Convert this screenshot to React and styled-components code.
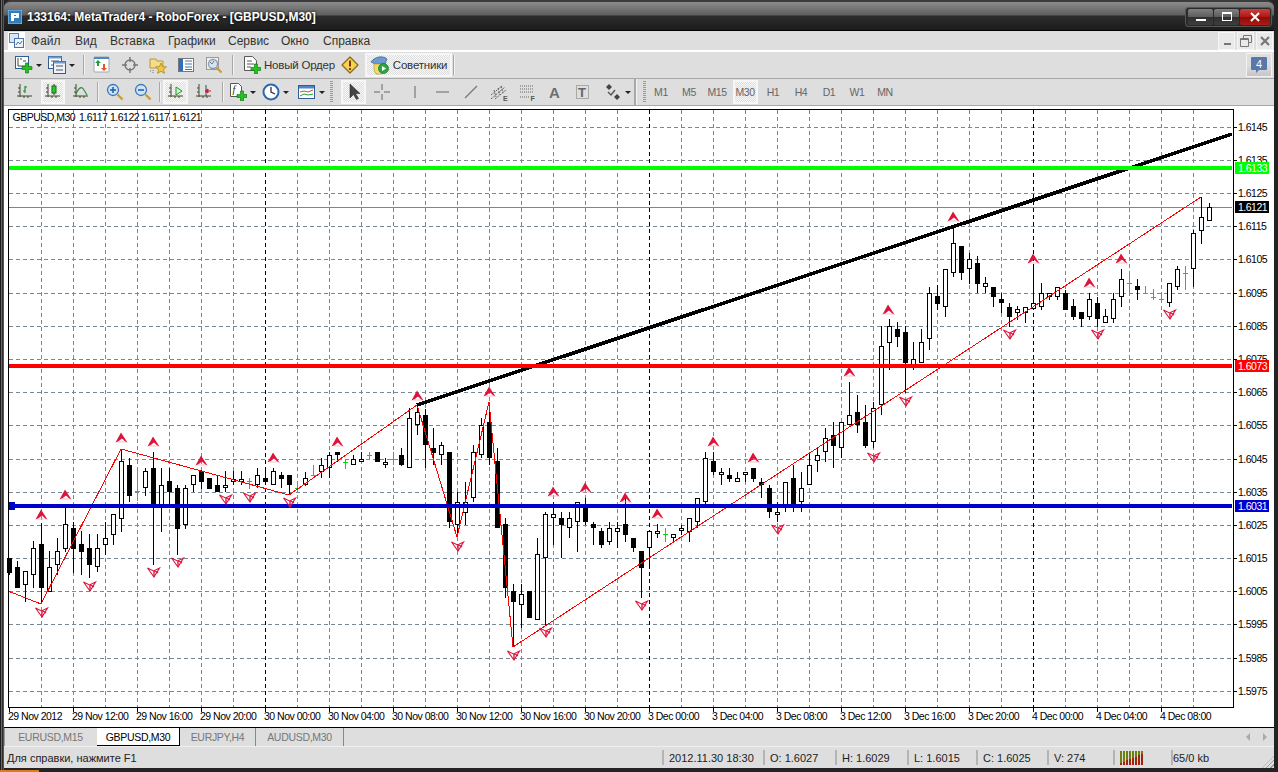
import React from "react";
import styled, { createGlobalStyle } from "styled-components";

const GlobalStyle = createGlobalStyle`
  html, body { margin: 0; padding: 0; background: #222; overflow: hidden; }
  body { font-family: "Liberation Sans", Arial, sans-serif; }
`;

// ---- chart data, read off in 3x crops: [high, bodyTop, bodyBottom, low, kind]
const seg = (x, y0, rows) =>
  rows.map((r, i) => ({
    x: x + i * 8,
    hi: Math.round(y0 + r[0] / 3),
    top: Math.round(y0 + r[1] / 3),
    bot: Math.round(y0 + r[2] / 3),
    lo: Math.round(y0 + r[3] / 3),
    kind: r[4],
  }));

const candles = [
  ...seg(9, 420, [
    [415, 415, 458, 465, "b"], [423, 441, 503, 503, "b"], [454, 454, 494, 545, "w"], [363, 385, 464, 503, "w"],
    [310, 372, 503, 552, "b"], [393, 441, 515, 515, "w"], [354, 393, 434, 466, "w"], [262, 313, 386, 396, "w"],
    [305, 324, 386, 460, "b"], [333, 372, 395, 465, "b"], [343, 384, 434, 473, "b"], [343, 385, 442, 455, "w"],
    [305, 355, 374, 405, "w"], [283, 283, 344, 375, "w"], [87, 124, 296, 336, "w"], [115, 135, 227, 245, "b"],
    [145, 214, 214, 242, "g"], [143, 153, 205, 228, "w"], [97, 144, 252, 435, "b"], [144, 196, 265, 336, "w"],
    [144, 183, 215, 258, "b"], [195, 204, 326, 405, "b"], [195, 205, 314, 327, "w"], [166, 166, 196, 216, "w"],
    [150, 153, 185, 208, "b"], [175, 175, 206, 206, "b"], [165, 196, 215, 216, "b"], [153, 196, 205, 216, "w"],
    [153, 176, 185, 196, "w"], [153, 176, 185, 196, "w"], [175, 184, 184, 207, "g"], [143, 166, 196, 205, "w"],
    [145, 175, 186, 190, "b"], [145, 154, 196, 196, "w"], [155, 166, 176, 205, "b"], [166, 166, 196, 225, "b"],
    [196, 204, 204, 215, "g"], [155, 175, 196, 198, "w"], [136, 166, 166, 166, "g"],
  ]),
  ...seg(321, 380, [
    [235, 255, 275, 295, "w"], [215, 226, 265, 295, "w"], [216, 216, 226, 245, "b"], [236, 245, 245, 266, "g"],
    [226, 236, 256, 256, "w"], [216, 236, 245, 245, "w"], [216, 226, 226, 236, "g"], [216, 216, 245, 245, "b"],
    [235, 245, 256, 265, "w"], [215, 236, 236, 255, "g"], [205, 226, 256, 258, "b"], [85, 115, 265, 265, "w"],
    [77, 97, 136, 166, "w"], [87, 105, 196, 265, "b"], [145, 205, 218, 255, "b"], [186, 196, 226, 256, "w"],
    [216, 216, 425, 445, "b"], [335, 365, 434, 465, "w"], [305, 365, 400, 435, "w"], [195, 217, 355, 365, "w"],
    [115, 136, 226, 235, "w"], [85, 125, 235, 255, "b"], [205, 244, 445, 445, "b"], [415, 433, 623, 653, "b"],
    [613, 633, 665, 800, "b"], [613, 643, 674, 743, "w"], [633, 633, 713, 713, "b"], [473, 523, 721, 721, "w"],
    [395, 403, 535, 735, "w"], [365, 403, 415, 495, "w"], [395, 415, 434, 535, "b"], [395, 415, 445, 475, "w"],
    [365, 365, 425, 515, "w"], [355, 385, 425, 435, "b"], [425, 433, 445, 495, "b"], [445, 453, 495, 505, "b"],
    [425, 445, 485, 495, "w"], [425, 445, 455, 505, "w"], [355, 433, 465, 485, "b"], [475, 475, 505, 515, "b"],
  ]),
  ...seg(641, 360, [
    [573, 573, 623, 714, "b"], [514, 514, 565, 625, "w"], [492, 514, 523, 535, "w"], [505, 523, 523, 545, "g"],
    [523, 523, 535, 545, "w"], [495, 505, 514, 525, "w"], [475, 475, 515, 545, "w"], [415, 415, 485, 505, "w"],
    [277, 295, 425, 445, "w"], [275, 304, 335, 345, "b"], [325, 335, 346, 375, "w"], [325, 345, 356, 365, "b"],
    [335, 355, 365, 365, "w"], [335, 335, 346, 365, "w"], [325, 325, 356, 365, "b"], [355, 365, 375, 415, "b"],
    [375, 385, 455, 475, "b"], [425, 455, 464, 485, "w"], [365, 365, 445, 455, "w"], [315, 355, 435, 455, "b"],
    [335, 385, 425, 455, "w"], [275, 315, 376, 376, "w"], [265, 286, 304, 335, "w"], [205, 235, 277, 305, "w"],
    [187, 225, 257, 325, "b"], [187, 187, 265, 295, "w"], [65, 166, 196, 196, "w"], [105, 156, 196, 220, "b"],
    [135, 186, 257, 265, "b"], [125, 145, 247, 265, "w"],
  ]),
  ...seg(881, 290, [
    [108, 168, 345, 375, "w"], [88, 108, 158, 240, "w"], [96, 117, 140, 170, "b"], [108, 126, 218, 310, "b"],
    [156, 208, 228, 240, "w"], [117, 156, 218, 218, "w"], [-10, 10, 148, 180, "w"], [-15, 18, 42, 60, "b"],
  ]),
  ...seg(945, 180, [
    [268, 268, 380, 410, "w"], [140, 190, 280, 290, "w"], [198, 198, 280, 300, "b"], [220, 238, 268, 312, "w"],
    [228, 250, 312, 340, "b"], [290, 310, 320, 340, "w"], [320, 320, 350, 380, "b"], [340, 358, 370, 400, "b"],
    [370, 380, 410, 440, "b"], [378, 388, 398, 420, "w"], [380, 380, 400, 428, "w"], [252, 370, 388, 390, "w"],
    [310, 340, 380, 390, "w"], [340, 340, 350, 360, "w"], [320, 320, 350, 360, "w"], [330, 340, 390, 390, "b"],
    [358, 378, 410, 420, "b"], [397, 397, 418, 440, "b"], [340, 358, 410, 420, "w"], [350, 370, 418, 440, "b"],
    [388, 408, 428, 428, "w"], [340, 358, 418, 428, "w"], [268, 298, 350, 380, "w"], [278, 310, 310, 340, "g"],
    [298, 318, 330, 360, "b"], [318, 340, 340, 340, "g"], [328, 350, 350, 360, "g"], [340, 358, 358, 370, "g"],
    [310, 310, 370, 380, "w"], [258, 268, 320, 330, "w"], [258, 280, 280, 330, "g"], [150, 160, 268, 320, "w"],
    [52, 110, 152, 192, "w"], [70, 82, 122, 122, "w"],
  ]),
];

const fractalsUp = [
  [41, 515], [65, 495], [121, 438], [153, 442], [201, 461], [273, 458], [337, 442], [417, 396], [489, 392],
  [553, 492], [585, 488], [625, 498], [657, 514], [713, 442], [753, 458], [849, 372], [888, 310], [953, 217],
  [1033, 259], [1089, 283], [1121, 259],
];
const fractalsDown = [
  [41, 612], [89, 586], [153, 572], [177, 562], [225, 499], [249, 497], [289, 502], [457, 546], [513, 655],
  [545, 632], [641, 605], [777, 529], [873, 457], [905, 401], [1009, 334], [1097, 334], [1169, 314],
];
const zigzag = "8,591 41,604 121,449 289,495 417,405 457,537 489,402 513,647 1201,197";

const vGrid = Array.from({ length: 37 }, (_, i) => 41 + i * 32);
const hGrid = Array.from({ length: 18 }, (_, i) => Math.round(126.7 + i * 33.18));
const timeLabels = [
  "29 Nov 2012", "29 Nov 12:00", "29 Nov 16:00", "29 Nov 20:00", "30 Nov 00:00", "30 Nov 04:00", "30 Nov 08:00",
  "30 Nov 12:00", "30 Nov 16:00", "30 Nov 20:00", "3 Dec 00:00", "3 Dec 04:00", "3 Dec 08:00", "3 Dec 12:00",
  "3 Dec 16:00", "3 Dec 20:00", "4 Dec 00:00", "4 Dec 04:00", "4 Dec 08:00",
];
const priceTags = [
  { y: 168, label: "1.6133", bg: "#00ff00" },
  { y: 207, label: "1.6121", bg: "#000" },
  { y: 366, label: "1.6073", bg: "#ff0000" },
  { y: 506, label: "1.6031", bg: "#0000cd" },
];

const GRID = "#778899";

function Candle({ c }) {
  if (c.kind === "g") {
    return (
      <g fill="#00e000">
        <rect x={c.x} y={c.hi} width="1" height={c.lo - c.hi} />
        <rect x={c.x - 2} y={c.top} width="5" height="1" />
      </g>
    );
  }
  return (
    <g>
      <rect x={c.x} y={c.hi} width="1" height={c.lo - c.hi} fill="#000" />
      {c.kind === "b" ? (
        <rect x={c.x - 2} y={c.top} width="5" height={c.bot - c.top} fill="#000" />
      ) : (
        <rect x={c.x - 1.5} y={c.top + 0.5} width="4" height={c.bot - c.top - 1} fill="#fff" stroke="#000" />
      )}
    </g>
  );
}

function Fractal({ x, y, up }) {
  return up ? (
    <g transform={`translate(${x + 0.5} ${y})`}>
      <path d="M-.5-5.5 6 4.5 3 3.2.5.5-3 3.2-6 4.5Z" fill="#dc143c" />
      <path d="M-4 4H5" stroke="#f2a6b8" strokeWidth=".7" />
      <path d="M1.5 1.5 3 3.5" stroke="#fff" strokeWidth=".7" />
    </g>
  ) : (
    <g transform={`translate(${x + 0.5} ${y})`} fill="none" stroke="#dc143c">
      <path d="M-6-4 0-1 6-4 .5 5Z" strokeWidth="1.1" />
      <path d="M.5-1V5M1.5-1 4.5 1" strokeWidth="1.4" />
    </g>
  );
}

function PriceChart() {
  return (
    <ChartSvg viewBox="4 106 1270 621" width="1270" height="621">
      <rect x="4" y="106" width="1270" height="621" fill="#fff" />
      <g shapeRendering="crispEdges">
        {hGrid.map((y) => (
          <line key={y} x1="9" x2="1232" y1={y + 0.5} y2={y + 0.5} stroke={GRID} strokeDasharray="4 3" />
        ))}
        {vGrid.map((x) => (
          <line
            key={x}
            x1={x + 0.5}
            x2={x + 0.5}
            y1="110"
            y2="707"
            stroke={(x - 265) % 384 === 0 ? "#000" : GRID}
            strokeDasharray="4 3"
          />
        ))}
        <rect x="9" y="207" width="1223" height="1" fill={GRID} />
        {candles.map((c) => (
          <Candle key={c.x} c={c} />
        ))}
        <polyline points={zigzag} fill="none" stroke="#ff0000" />
        <line x1="417" y1="405" x2="1232" y2="134" stroke="#000" strokeWidth="3.6" />
        <rect x="9" y="166" width="1223" height="4" fill="#00ff00" />
        <rect x="9" y="364" width="1223" height="4" fill="#ff0000" />
        <rect x="9" y="504" width="1223" height="4" fill="#0000cd" />
        <rect x="9" y="502" width="6" height="8" fill="#0000cd" />
        <rect x="8" y="109" width="1225" height="598.5" fill="none" stroke="#000" />
        {hGrid.map((y) => (
          <rect key={y} x="1233" y={y} width="4" height="1" fill="#000" />
        ))}
        {timeLabels.map((_, i) => (
          <rect key={i} x={9 + i * 64} y="708" width="1" height="4" fill="#000" />
        ))}
      </g>
      {fractalsUp.map(([x, y]) => (
        <Fractal key={x} x={x} y={y} up />
      ))}
      {fractalsDown.map(([x, y]) => (
        <Fractal key={x} x={x} y={y} />
      ))}
      <AxisText x="12.5" y="121">GBPUSD,M30</AxisText>
      {["1.6117", "1.6122", "1.6117", "1.6121"].map((v, i) => (
        <AxisText key={i} x={79 + i * 31} y="121">
          {v}
        </AxisText>
      ))}
      {hGrid.map((y, i) => (
        <AxisText key={y} x="1238" y={y + 4}>
          {(1.6145 - i * 0.001).toFixed(4)}
        </AxisText>
      ))}
      {timeLabels.map((t, i) => (
        <AxisText key={t} x={8 + i * 64} y="720">
          {t}
        </AxisText>
      ))}
      {priceTags.map((t) => (
        <g key={t.label}>
          <rect x="1235" y={t.y - 6} width="34" height="12" fill={t.bg} shapeRendering="crispEdges" />
          <AxisText x="1238" y={t.y + 4} fill="#fff">
            {t.label}
          </AxisText>
        </g>
      ))}
    </ChartSvg>
  );
}

// ---- toolbar icons
const Svg = ({ w = 18, h = 18, children }) => (
  <svg width={w} height={h} viewBox={`0 0 ${w} ${h}`} style={{ display: "block" }}>
    {children}
  </svg>
);
const Plus = ({ x = 8, y = 8 }) => (
  <path
    transform={`translate(${x} ${y})`}
    d="M3.5 0h3v3.5H10v3H6.5V10h-3V6.5H0v-3h3.5z"
    fill="#22c322"
    stroke="#0b6b0b"
    strokeWidth=".6"
  />
);
const AxisMark = ({ color = "#3a4a2a" }) => (
  <path d="M4 1v13M1 13h15M2 5h2M2 9h2M8 13v2M12 13v2" fill="none" stroke={color} />
);

const IconNewChart = () => (
  <Svg>
    <rect x=".5" y=".5" width="13" height="12" fill="#fff" stroke="#2e5d9a" />
    <path d="M3 2v8h9M5 3h2M8 5h3" fill="none" stroke="#444" />
    <Plus x="7" y="7" />
  </Svg>
);
const IconProfiles = () => (
  <Svg>
    <rect x=".5" y=".5" width="13" height="12" fill="#fff" stroke="#2e5d9a" />
    <rect x=".5" y=".5" width="13" height="2" fill="#6f9bd1" />
    <path d="M3 5h8M3 9h8" stroke="#555" />
    <rect x="5.5" y="5.5" width="12" height="12" fill="#eaf2fb" stroke="#2e5d9a" />
    <rect x="5.5" y="5.5" width="12" height="2" fill="#6f9bd1" />
    <path d="M8 10h7M8 14h7" stroke="#555" />
  </Svg>
);
const IconMarket = () => (
  <Svg>
    <rect x="1" y="1" width="15" height="15" rx="1" fill="#fff" stroke="#9aa9b5" />
    <rect x="1" y="1" width="15" height="2" fill="#4f86c6" />
    <path d="M5 4l3 3H6v3H4V7H2z" fill="#1f9e3b" />
    <path d="M11 15l-3-3h2V8h2v4h2z" fill="#e2542a" />
  </Svg>
);
const IconNavigator = () => (
  <Svg>
    <circle cx="9" cy="9" r="5" fill="none" stroke="#777" strokeWidth="1.4" />
    <path d="M9 1v5M9 12v5M1 9h5M12 9h5" stroke="#777" strokeWidth="1.4" />
  </Svg>
);
const IconFavorites = () => (
  <Svg>
    <path d="M1 3h6l1 2h6v7H1z" fill="#f4dc8c" stroke="#b9963e" />
    <path d="M12 7l1.6 3.6 3.9.3-3 2.6 1 3.8-3.5-2-3.4 2 .9-3.8-3-2.6 3.9-.3z" fill="#f0c63b" stroke="#a37d1b" strokeWidth=".7" />
    <path d="M4 14v3M1 15h1" stroke="#777" strokeDasharray="1 1" />
  </Svg>
);
const IconTerminal = () => (
  <Svg>
    <rect x="1.5" y="2.5" width="15" height="13" fill="#fff" stroke="#777" />
    <rect x="2" y="3" width="4" height="12" fill="#2f6fbe" />
    <path d="M8 5h7M8 8h7M8 11h7M8 13.5h7" stroke="#4a74a8" />
  </Svg>
);
const IconTester = () => (
  <Svg>
    <rect x="1.5" y="1.5" width="12" height="12" fill="#eee" stroke="#999" />
    <circle cx="8" cy="8" r="4.5" fill="#d5e4f3" stroke="#8a9bab" strokeWidth="1.3" />
    <path d="M5 6l2 2 2-3" fill="none" stroke="#777" />
    <path d="M11.5 11.5l5 5" stroke="#c79d3d" strokeWidth="2.2" />
  </Svg>
);
const IconOrder = () => (
  <Svg>
    <path d="M1.5.5h8l4 4v10h-12z" fill="#fff" stroke="#555" />
    <path d="M4 5h5M4 8h7M4 11h4" stroke="#555" />
    <Plus x="8" y="8" />
  </Svg>
);
const IconAlert = () => (
  <Svg>
    <path d="M9 1l8 8-8 8-8-8z" fill="#f6d255" stroke="#8a6a18" strokeWidth="1.2" strokeLinejoin="round" />
    <path d="M9 4.5v6M9 12v2" stroke="#7a3d10" strokeWidth="2" />
  </Svg>
);
const IconExperts = () => (
  <Svg w={20} h={20}>
    <path d="M1 7c3-5 12-7 16-3l-2 5H5z" fill="#6d9bd0" stroke="#35608f" strokeWidth=".7" />
    <path d="M4 9h11v4l-3 6H6l-2-4z" fill="#f0dc6c" stroke="#b49a33" strokeWidth=".7" />
    <circle cx="13.5" cy="13.5" r="5" fill="#28a843" stroke="#116b27" strokeWidth=".7" />
    <path d="M12 11l4 2.5-4 2.5z" fill="#fff" />
  </Svg>
);
const IconBars = () => (
  <Svg>
    <AxisMark />
    <path d="M9 3v7M7 8h2M9 4h2" fill="none" stroke="#1c8f2a" strokeWidth="1.2" />
  </Svg>
);
const IconCandles = () => (
  <Svg>
    <AxisMark />
    <path d="M10 1v11" stroke="#333" />
    <rect x="8" y="3" width="4" height="7" fill="#32c832" stroke="#126a12" />
  </Svg>
);
const IconLine = () => (
  <Svg>
    <AxisMark />
    <path d="M4 11c3-7 6-8 8-4l3 5" fill="none" stroke="#2c8a3a" strokeWidth="1.1" />
  </Svg>
);
const IconZoom = ({ minus }) => (
  <Svg>
    <circle cx="7" cy="7" r="5.5" fill="#cfe3f7" stroke="#3a78bd" strokeWidth="1.3" />
    <path d="M4 7h6" stroke="#2a62a8" strokeWidth="1.6" />
    {!minus && <path d="M7 4v6" stroke="#2a62a8" strokeWidth="1.6" />}
    <path d="M11.5 11.5l5 5" stroke="#c79d3d" strokeWidth="2.4" />
  </Svg>
);
const IconAutoScroll = () => (
  <Svg>
    <AxisMark />
    <path d="M9 4l6 4-6 4z" fill="#d8f5d0" stroke="#1c9a2b" />
  </Svg>
);
const IconShift = () => (
  <Svg>
    <AxisMark />
    <path d="M11 2v11" stroke="#2c4a7a" />
    <path d="M16 8h-3M13 6l-3 2 3 2z" fill="#d21f1f" stroke="#d21f1f" />
  </Svg>
);
const IconIndicators = () => (
  <Svg>
    <path d="M1.5.5h8l3 3v10h-11z" fill="#fff" stroke="#555" />
    <text x="3.5" y="10" fontSize="10" fontFamily="Liberation Serif, serif" fontStyle="italic" fill="#222">f</text>
    <Plus x="8" y="8" />
  </Svg>
);
const IconClock = () => (
  <Svg>
    <circle cx="9" cy="9" r="7.5" fill="#fff" stroke="#2c68ad" strokeWidth="2" />
    <path d="M9 4v5l4 2" fill="none" stroke="#2f2f4a" strokeWidth="1.3" />
  </Svg>
);
const IconTemplate = () => (
  <Svg>
    <rect x=".5" y="2.5" width="16" height="13" fill="#fff" stroke="#2e5d9a" />
    <rect x="1" y="3" width="15" height="2.5" fill="#4f86c6" />
    <path d="M2 9l4-1 4 1 5-2" fill="none" stroke="#d24a2a" />
    <path d="M2 13l4-2 4 1 5-1" fill="none" stroke="#2c9a3a" />
  </Svg>
);
const IconCursor = () => (
  <Svg>
    <path d="M5 1v14l3.5-3.5 3 5 2-1-3-5H15z" fill="#444" stroke="#222" strokeWidth=".5" />
  </Svg>
);
const IconCross = () => (
  <Svg>
    <path d="M9 1v6M9 11v6M1 9h6M11 9h6" stroke="#666" />
  </Svg>
);
const IconVLine = () => (
  <Svg>
    <path d="M9 3v12" stroke="#666" />
  </Svg>
);
const IconHLine = () => (
  <Svg>
    <path d="M2 9h13" stroke="#666" />
  </Svg>
);
const IconTrend = () => (
  <Svg>
    <path d="M3 15L15 3" stroke="#777" strokeWidth="1.2" />
  </Svg>
);
const IconFibChannel = () => (
  <Svg>
    <path d="M1 12L12 3M1 16L15 4M5 16L16 7M4 7l2 7M8 5l2 7M11 3l2 7" fill="none" stroke="#666" strokeDasharray="2 1" />
    <text x="13" y="18" fontSize="7" fontWeight="bold" fill="#555">E</text>
  </Svg>
);
const IconFibLevels = () => (
  <Svg>
    <path d="M2 3h13M2 6h13M2 9h13M2 14h10" stroke="#666" strokeDasharray="1 1" />
    <text x="12.5" y="18" fontSize="7" fontWeight="bold" fill="#555">F</text>
  </Svg>
);
const IconTextA = () => (
  <Svg>
    <text x="3" y="15" fontSize="15" fontWeight="bold" fill="#6e6e6e">A</text>
  </Svg>
);
const IconTextT = () => (
  <Svg>
    <rect x="2.5" y="2.5" width="12" height="13" fill="none" stroke="#777" strokeDasharray="1 1" />
    <text x="4" y="14" fontSize="13" fontWeight="bold" fill="#666">T</text>
  </Svg>
);
const IconArrows = () => (
  <Svg>
    <path d="M5 1l3 3-3 3-3-3z" fill="#444" />
    <path d="M13 11l3 3-3 3-3-3z" fill="#444" />
    <path d="M4 9l3 3 4-5" fill="none" stroke="#555" strokeWidth="1.4" />
  </Svg>
);
const IconAppDoc = () => (
  <svg width="17" height="18" viewBox="0 0 17 18" style={{ display: "block" }}>
    <rect x="0" y="0" width="17" height="18" fill="#fff" />
    <rect x="1.5" y="1.5" width="9" height="9" fill="#dbe6f4" stroke="#5b82b5" />
    <rect x="6.5" y="6.5" width="9" height="9" fill="#eef3fa" stroke="#4a72a8" />
    <path d="M8 13l2-3 2 2 2-3" fill="none" stroke="#4a72a8" />
  </svg>
);
const IconLogo = () => (
  <svg width="14" height="14" viewBox="0 0 14 14" style={{ display: "block" }}>
    <rect width="14" height="14" fill="#2f7fbe" stroke="#9cc8e8" />
    <path d="M3 3h8v5H6v3H3zM6 5v1h2V5z" fill="#fff" fillRule="evenodd" />
  </svg>
);
const IconBell = () => (
  <svg width="18" height="18" viewBox="0 0 18 18" style={{ display: "block" }}>
    <path d="M2 1h14a1 1 0 0 1 1 1v11a1 1 0 0 1-1 1H9l-3 3v-3H2a1 1 0 0 1-1-1V2a1 1 0 0 1 1-1z" fill="#5878ac" />
    <text x="9" y="11.5" textAnchor="middle" fontSize="11" fontFamily="Liberation Sans, sans-serif" fill="#fff">4</text>
  </svg>
);
const IconSignal = () => (
  <svg width="24" height="14" viewBox="0 0 24 14" style={{ display: "block" }} shapeRendering="crispEdges">
    {Array.from({ length: 8 }, (_, i) => {
      const split = 12 - i * 1.3;
      return (
        <g key={i}>
          <rect x={i * 3} y="0" width="2" height={split} fill="#6d7f10" />
          <rect x={i * 3} y={split} width="2" height={14 - split} fill="#a5200f" />
        </g>
      );
    })}
  </svg>
);

// ---- page parts
const Desktop = styled.div`
  position: relative;
  width: 1278px;
  height: 772px;
  box-sizing: border-box;
  padding: 0 4px 4px;
  display: flex;
  flex-direction: column;
  overflow: hidden;
  background:
    linear-gradient(90deg, #1b1b1b 0 1px, #6a6a6a 1px 2px, #2c2c2c 2px 3px, #555 3px 4px, transparent 4px) left / 4px 100% no-repeat,
    #232323;
  &::after {
    content: "";
    position: absolute;
    left: 0;
    bottom: 0;
    width: 39px;
    height: 2px;
    background: #e07a1f;
  }
`;

const TitleBar = styled.div`
  height: 31px;
  flex: none;
  display: flex;
  align-items: center;
  box-sizing: border-box;
  padding: 2px 3px 0 4px;
  border-radius: 7px 7px 0 0;
  border-top: 2px solid #3c3c3c;
  border-bottom: 1px solid #000;
  background: linear-gradient(
    180deg,
    #8b8b8b 0,
    #5e5e5e 13px,
    #2c2c2c 14px,
    #1c1c1c 100%
  );
`;

const TitleText = styled.div`
  margin-left: 5px;
  font-size: 12px;
  font-weight: bold;
  color: #fff;
  white-space: nowrap;
  text-shadow: 0 0 3px #000;
`;

const WindowControls = styled.div`
  margin-left: auto;
  display: flex;
  height: 16px;
  padding: 1px;
  background: #2a2a2a;
  border-radius: 3px;
  box-shadow: 0 0 0 1px #555;
`;

const WindowButton = styled.div`
  width: ${(p) => p.$w}px;
  display: flex;
  align-items: center;
  justify-content: center;
  border-radius: 2px;
  margin-left: 1px;
  background: ${(p) =>
    p.$danger
      ? "linear-gradient(180deg, #c9423f 0, #b01612 50%, #8a0c08 51%, #b01a14 100%)"
      : "linear-gradient(180deg, #808080 0, #5c5c5c 50%, #2f2f2f 51%, #3e3e3e 100%)"};
`;

const MenuBar = styled.div`
  height: 20px;
  flex: none;
  display: flex;
  align-items: center;
  box-sizing: border-box;
  padding-left: 4px;
  background: #dedede;
  border-bottom: 1px solid #fff;
`;

const MenuItem = styled.span`
  width: ${(p) => p.$w}px;
  font-size: 12px;
  color: #333;
`;

const MdiButtons = styled.div`
  margin-left: auto;
  display: flex;
  gap: 2px;
  padding-right: 1px;
  height: 18px;
`;

const MdiButton = styled.div`
  width: 17px;
  box-sizing: border-box;
  display: flex;
  align-items: center;
  justify-content: center;
  background: #e9e9e9;
  border: 1px solid #f6f6f6;
`;

const Toolbar = styled.div`
  height: ${(p) => p.$h}px;
  flex: none;
  display: flex;
  align-items: center;
  box-sizing: border-box;
  background: #dedede;
  border-top: ${(p) => (p.$top ? "1px solid #fff" : "0")};
  border-bottom: 1px solid #a8a8a8;
  padding-left: ${(p) => p.$pad}px;
`;

const ToolButton = styled.div`
  width: ${(p) => p.$w || 28}px;
  height: 24px;
  margin: 0 ${(p) => p.$gap || 0}px;
  flex: none;
  box-sizing: border-box;
  display: flex;
  align-items: center;
  justify-content: ${(p) => (p.$pl !== undefined ? "flex-start" : "center")};
  padding-left: ${(p) => p.$pl || 0}px;
  gap: 3px;
  font-size: 11.5px;
  letter-spacing: -0.2px;
  color: #333;
  white-space: nowrap;
  ${(p) =>
    p.$pressed &&
    `
    border: 2px solid #f6f6f6;
    background: repeating-conic-gradient(#f8f8f8 0 25%, #dedede 0 50%) 0 0 / 2px 2px;
  `}
`;

const Caret = styled.span`
  width: 0;
  height: 0;
  border-left: 3px solid transparent;
  border-right: 3px solid transparent;
  border-top: 3px solid #222;
`;

const Separator = styled.div`
  width: 1px;
  height: 20px;
  flex: none;
  margin: 0 ${(p) => p.$gap || 0}px;
  background: #a8a8a8;
  border-right: 1px solid #f2f2f2;
`;

const Spacer = styled.div`
  width: ${(p) => p.$w}px;
  flex: none;
`;

const Grip = styled.div`
  width: 3px;
  height: 22px;
  flex: none;
  margin: ${(p) => p.$m};
  background: repeating-linear-gradient(180deg, #999 0 1px, #dedede 1px 2px);
`;

const Notifier = styled.div`
  margin-left: auto;
  margin-right: 2px;
  width: 26px;
  height: 24px;
  box-sizing: border-box;
  display: flex;
  align-items: center;
  justify-content: center;
  border: 1px solid #f2f2f2;
  background: linear-gradient(180deg, #dedede 0 50%, #c6c6c6 100%);
`;

const BarEnd = styled.div`
  width: 3px;
  height: 100%;
  flex: none;
  margin: 0 3px;
  border-left: 2px solid #a8a8a8;
  border-right: 1px solid #f2f2f2;
  box-sizing: border-box;
`;

const TimeframeText = styled.span`
  color: #666;
  font-size: 10.5px;
  letter-spacing: -0.4px;
`;

const ChartSvg = styled.svg`
  display: block;
  flex: none;
`;

const AxisText = styled.text`
  font-family: "Liberation Sans", Arial, sans-serif;
  font-size: 10.5px;
  letter-spacing: -0.5px;
  fill: ${(p) => p.fill || "#000"};
`;

const TabBar = styled.div`
  height: 20px;
  flex: none;
  display: flex;
  align-items: stretch;
  box-sizing: border-box;
  background: #dedede;
  border-top: 1px solid #000;
  border-bottom: 1px solid #efefef;
  font-size: 10.5px;
  letter-spacing: -0.3px;
`;

const Tab = styled.div`
  width: ${(p) => p.$w}px;
  flex: none;
  box-sizing: border-box;
  display: flex;
  align-items: center;
  justify-content: center;
  color: ${(p) => (p.$active ? "#000" : "#777")};
  background: ${(p) => (p.$active ? "#fff" : "transparent")};
  border-left: ${(p) => (p.$plain ? "1px solid #999" : "0")};
  border-right: 1px solid ${(p) => (p.$active ? "#000" : p.$plain ? "transparent" : "#888")};
  border-bottom: ${(p) => (p.$active ? "1px solid #000" : "0")};
`;

const TabArrows = styled.div`
  margin-left: auto;
  display: flex;
  align-items: center;
  gap: 13px;
  padding-right: 7px;
`;

const TabArrow = styled.span`
  width: 0;
  height: 0;
  border-top: 4px solid transparent;
  border-bottom: 4px solid transparent;
  ${(p) => (p.$left ? "border-right: 4px solid #aaa;" : "border-left: 4px solid #aaa;")}
`;

const StatusBar = styled.div`
  position: relative;
  height: 21px;
  flex: none;
  display: flex;
  align-items: center;
  background: #dedede;
  font-size: 11px;
  color: #222;
`;

const StatusCell = styled.div`
  width: ${(p) => p.$w}px;
  flex: ${(p) => (p.$w ? "none" : "1")};
  height: 15px;
  box-sizing: border-box;
  padding-left: ${(p) => p.$pad ?? 5}px;
  display: flex;
  align-items: center;
  white-space: nowrap;
  border-left: ${(p) => (p.$first ? "0" : "2px solid #b4b4b4")};
`;

const ResizeGrip = styled.div`
  position: absolute;
  right: 0;
  bottom: 0;
  width: 12px;
  height: 12px;
  background: repeating-linear-gradient(135deg, transparent 0 2px, #999 2px 3px);
  clip-path: polygon(100% 0, 100% 100%, 0 100%);
`;

const drawTools = [IconVLine, IconHLine, IconTrend, IconFibChannel, IconFibLevels, IconTextA, IconTextT];
const timeframes = ["M1", "M5", "M15", "M30", "H1", "H4", "D1", "W1", "MN"];
const tabs = [
  { name: "EURUSD,M15", w: 93, plain: true },
  { name: "GBPUSD,M30", w: 83, active: true },
  { name: "EURJPY,H4", w: 76 },
  { name: "AUDUSD,M30", w: 88 },
];
const stats = [
  { text: "2012.11.30 18:30", w: 101 },
  { text: "O: 1.6027", w: 72 },
  { text: "H: 1.6029", w: 72 },
  { text: "L: 1.6015", w: 69 },
  { text: "C: 1.6025", w: 71 },
  { text: "V: 274", w: 66 },
];

export default function App() {
  return (
    <>
      <GlobalStyle />
      <Desktop>
        <TitleBar>
          <IconLogo />
          <TitleText>133164: MetaTrader4 - RoboForex - [GBPUSD,M30]</TitleText>
          <WindowControls>
            <WindowButton $w={25}>
              <svg width="10" height="10"><rect x="0" y="7" width="10" height="2" fill="#fff" /></svg>
            </WindowButton>
            <WindowButton $w={25}>
              <svg width="10" height="10"><rect x=".5" y=".5" width="9" height="8" fill="none" stroke="#fff" /><rect x="0" y="0" width="10" height="2" fill="#fff" /></svg>
            </WindowButton>
            <WindowButton $w={30} $danger>
              <svg width="10" height="10"><path d="M1 1l8 8M9 1l-8 8" stroke="#fff" strokeWidth="2" /></svg>
            </WindowButton>
          </WindowControls>
        </TitleBar>

        <MenuBar>
          <MenuItem $w={23}><IconAppDoc /></MenuItem>
          <MenuItem $w={44}>Файл</MenuItem>
          <MenuItem $w={35}>Вид</MenuItem>
          <MenuItem $w={58}>Вставка</MenuItem>
          <MenuItem $w={60}>Графики</MenuItem>
          <MenuItem $w={53}>Сервис</MenuItem>
          <MenuItem $w={42}>Окно</MenuItem>
          <MenuItem $w={60}>Справка</MenuItem>
          <MdiButtons>
            <MdiButton>
              <svg width="10" height="10"><rect x="2" y="7" width="7" height="2" fill="#777" /></svg>
            </MdiButton>
            <MdiButton>
              <svg width="12" height="12"><path d="M3.5 3V.5h8v7H9M.5 3.5h8v8h-8zM.5 4.5h8" fill="none" stroke="#777" /></svg>
            </MdiButton>
            <MdiButton>
              <svg width="10" height="10"><path d="M1 1l8 8M9 1l-8 8" stroke="#777" strokeWidth="2.2" /></svg>
            </MdiButton>
          </MdiButtons>
        </MenuBar>

        <Toolbar $h={28} $top $pad={10}>
          <ToolButton $w={32} $pl={1}><IconNewChart /><Caret /></ToolButton>
          <ToolButton $w={32} $pl={1} $gap={1}><IconProfiles /><Caret /></ToolButton>
          <Separator $gap={3} />
          <ToolButton><IconMarket /></ToolButton>
          <ToolButton><IconNavigator /></ToolButton>
          <ToolButton><IconFavorites /></ToolButton>
          <ToolButton><IconTerminal /></ToolButton>
          <ToolButton><IconTester /></ToolButton>
          <Separator $gap={4} />
          <ToolButton $w={96} $gap={1} $pl={4}><IconOrder />Новый Ордер</ToolButton>
          <ToolButton><IconAlert /></ToolButton>
          <ToolButton $w={87} $pressed $gap={1}><IconExperts />Советники</ToolButton>
          <Separator />
          <Notifier><IconBell /></Notifier>
        </Toolbar>

        <Toolbar $h={27} $pad={7}>
          <ToolButton $w={24} $gap={2}><IconBars /></ToolButton>
          <ToolButton $w={24} $gap={2} $pressed><IconCandles /></ToolButton>
          <ToolButton $w={24} $gap={2}><IconLine /></ToolButton>
          <Separator $gap={2} />
          <ToolButton $w={24} $gap={2}><IconZoom /></ToolButton>
          <ToolButton $w={24} $gap={2}><IconZoom minus /></ToolButton>
          <Separator $gap={2} />
          <ToolButton $w={25} $pressed><IconAutoScroll /></ToolButton>
          <ToolButton $w={25} $gap={3}><IconShift /></ToolButton>
          <Separator $gap={3} />
          <ToolButton $w={28} $gap={1}><IconIndicators /><Caret /></ToolButton>
          <ToolButton $w={28} $gap={4}><IconClock /><Caret /></ToolButton>
          <ToolButton $w={28} $gap={4}><IconTemplate /><Caret /></ToolButton>
          <Grip $m="0 8px 0 1px" />
          <ToolButton $w={25} $pressed><IconCursor /></ToolButton>
          <ToolButton $w={24} $gap={4}><IconCross /></ToolButton>
          <Spacer $w={3} />
          {drawTools.map((Tool, i) => (
            <ToolButton key={i} $w={24} $gap={2}><Tool /></ToolButton>
          ))}
          <Spacer $w={6} />
          <ToolButton $w={28}><IconArrows /><Caret /></ToolButton>
          <BarEnd />
          <Grip $m="0 1px 0 3px" />
          {timeframes.map((t) => (
            <ToolButton key={t} $w={t === "M30" ? 25 : 28} $gap={t === "M30" ? 1.5 : 0} $pressed={t === "M30"}>
              <TimeframeText>{t}</TimeframeText>
            </ToolButton>
          ))}
        </Toolbar>

        <PriceChart />

        <TabBar>
          {tabs.map((t) => (
            <Tab key={t.name} $w={t.w} $active={t.active} $plain={t.plain}>{t.name}</Tab>
          ))}
          <TabArrows>
            <TabArrow $left />
            <TabArrow />
          </TabArrows>
        </TabBar>

        <StatusBar>
          <StatusCell $w={658} $first $pad={3}>Для справки, нажмите F1</StatusCell>
          {stats.map((s) => (
            <StatusCell key={s.text} $w={s.w}>{s.text}</StatusCell>
          ))}
          <StatusCell $w={58}><IconSignal /></StatusCell>
          <StatusCell $pad={0}>65/0 kb</StatusCell>
          <ResizeGrip />
        </StatusBar>
      </Desktop>
    </>
  );
}
